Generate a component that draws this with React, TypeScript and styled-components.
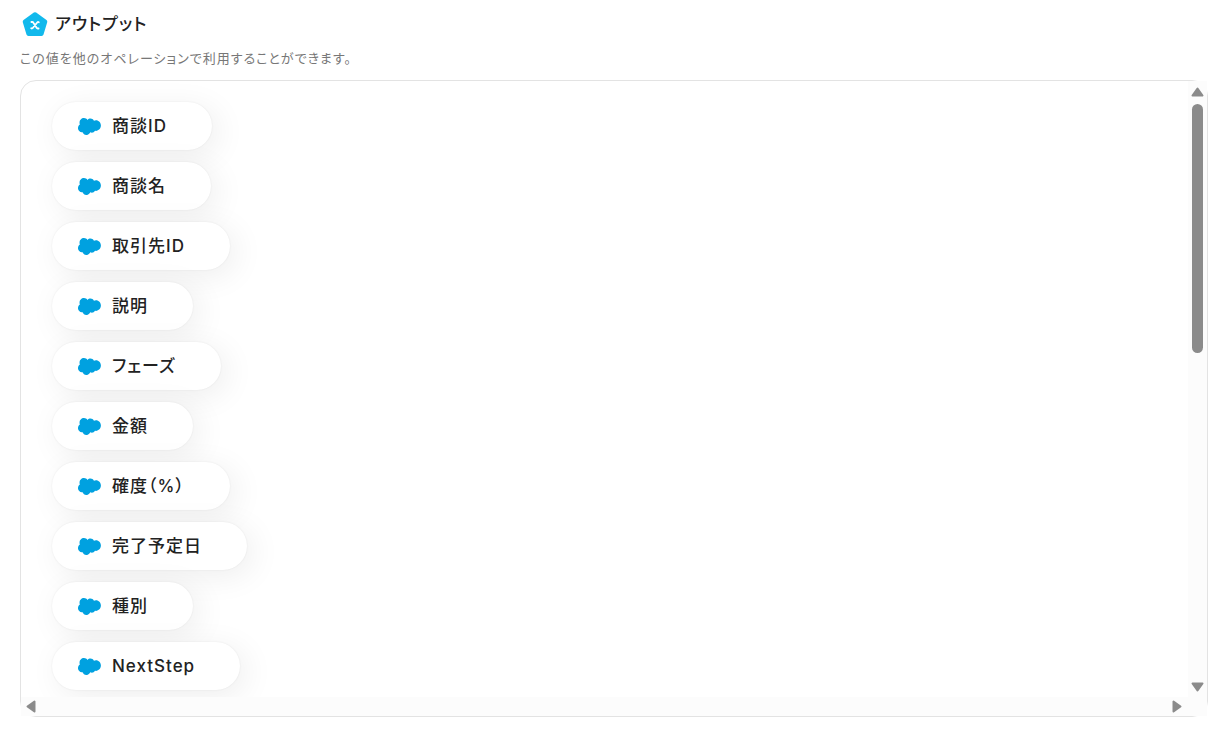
import React from "react";
import styled, { createGlobalStyle } from "styled-components";

const GlobalStyle = createGlobalStyle`
  *, *::before, *::after { box-sizing: border-box; }
  body {
    margin: 0;
    background: #fff;
    color: #222;
    font-family: Inter, "Noto Sans CJK JP", sans-serif;
    font-feature-settings: "palt";
    letter-spacing: 1px;
  }
`;

const Page = styled.main`
  display: flex;
  flex-direction: column;
  height: 100vh;
  padding: 8px 21px 35px 20px;
`;

const Header = styled.header`
  display: flex;
  align-items: center;
  gap: 6px;
  height: 32px;
  padding-left: 1px;
`;

const Title = styled.h2`
  margin: 0;
  font-size: 17px;
  line-height: 32px;
  font-weight: 500;
`;

const Description = styled.p`
  margin: 8px 0 12px;
  font-size: 13px;
  line-height: 20px;
  color: #777;
`;

const Panel = styled.section`
  flex: 1;
  min-height: 0;
  display: grid;
  grid-template-columns: minmax(0, 1fr) 19px;
  grid-template-rows: minmax(0, 1fr) 19px;
  border: 1px solid #e3e3e3;
  border-radius: 16px;
`;

const Viewport = styled.div`
  overflow: hidden;
  border-top-left-radius: 15px;
`;

const OutputList = styled.ul`
  display: flex;
  flex-direction: column;
  align-items: flex-start;
  gap: 12px;
  margin: 0;
  padding: 21px 31px;
  list-style: none;
`;

const OutputItem = styled.li`
  display: flex;
`;

const OutputButton = styled.button`
  display: flex;
  align-items: center;
  gap: 11px;
  height: 48px;
  padding: 0 45px 0 26px;
  border: 0;
  border-radius: 24px;
  background: #fff;
  box-shadow: 6px 6px 32px rgba(0, 0, 0, 0.07), 0 0 2px rgba(0, 0, 0, 0.08);
  color: inherit;
  font: inherit;
  font-feature-settings: inherit;
  letter-spacing: inherit;
  font-size: 17px;
  line-height: 24px;
  font-weight: 500;
  white-space: nowrap;
`;

const VerticalBar = styled.div`
  display: flex;
  flex-direction: column;
  align-items: center;
  justify-content: space-between;
  padding: 6px 0 5px;
  background: #fcfcfc;
`;

const VerticalTrack = styled.div`
  flex: 1;
  width: 11px;
  padding-top: 7px;
`;

const Thumb = styled.div`
  height: 43%;
  border-radius: 6px;
  background: #8b8b8b;
`;

const HorizontalBar = styled.div`
  grid-column: 1 / -1;
  display: flex;
  align-items: center;
  justify-content: space-between;
  padding: 0 25px 0 5px;
  background: #fcfcfc;
`;

const ScrollButton = styled.button`
  display: flex;
  padding: 0;
  border: 0;
  background: none;
`;

const outputs = [
  "商談ID",
  "商談名",
  "取引先ID",
  "説明",
  "フェーズ",
  "金額",
  "確度（%）",
  "完了予定日",
  "種別",
  "NextStep",
];

const OutputIcon = () => (
  <svg width="28" height="28" viewBox="0 0 28 28" aria-hidden="true">
    <path
      d="M14 4.200 24.300 11.600 20.600 24H7.400L3.700 11.600Z"
      fill="#12b9ec"
      stroke="#12b9ec"
      strokeWidth="4"
      strokeLinejoin="round"
    />
    <path
      d="M10.400 12H11.300Q12 12 12.400 12.700L15.600 17.800Q16 18.500 16.700 18.500H17.600M17.800 12.200Q16.900 11.700 16.200 12.500L11.800 18Q11.100 18.800 10.200 18.300"
      fill="none"
      stroke="#fff"
      strokeWidth="1.800"
      strokeLinecap="round"
      strokeLinejoin="round"
    />
  </svg>
);

const SalesforceCloud = () => (
  <svg width="23" height="17" viewBox="0 0 273 191" preserveAspectRatio="none" aria-hidden="true">
    <path
      fill="#00a1e0"
      d="M113 21.300c8.780-9.140 21-14.800 34.500-14.800 18 0 33.600 10 42 24.900a58 58 0 0 1 23.700-5.050c32.400 0 58.700 26.500 58.700 59.200s-26.300 59.200-58.700 59.200c-3.960 0-7.820-.398-11.600-1.150-7.350 13.100-21.400 22-37.400 22a42.700 42.700 0 0 1-18.800-4.320c-7.450 17.500-24.800 29.800-45 29.800-21.100 0-39-13.300-45.900-32a45.100 45.100 0 0 1-9.340.972c-25.100 0-45.400-20.600-45.400-45.900 0-17 9.140-31.800 22.700-39.800a52.600 52.600 0 0 1-4.350-21c0-29.200 23.700-52.800 52.900-52.800 17.100 0 32.400 8.150 42 20.800"
    />
  </svg>
);

const arrows = {
  up: { w: 13, h: 10, label: "上へスクロール", d: "M6.500 1.500 11.500 8.500H1.500Z" },
  down: { w: 13, h: 10, label: "下へスクロール", d: "M6.500 8.500 1.500 1.500H11.500Z" },
  left: { w: 10, h: 13, label: "左へスクロール", d: "M1.500 6.500 8.500 1.500V11.500Z" },
  right: { w: 10, h: 13, label: "右へスクロール", d: "M8.500 6.500 1.500 1.500V11.500Z" },
};

const Arrow = ({ direction }: { direction: keyof typeof arrows }) => {
  const { w, h, label, d } = arrows[direction];
  return (
    <ScrollButton type="button" aria-label={label}>
      <svg width={w} height={h} viewBox={`0 0 ${w} ${h}`} aria-hidden="true">
        <path d={d} fill="#8b8b8b" stroke="#8b8b8b" strokeWidth="2" strokeLinejoin="round" />
      </svg>
    </ScrollButton>
  );
};

export default function App() {
  return (
    <>
      <GlobalStyle />
      <Page lang="ja">
        <Header>
          <OutputIcon />
          <Title>アウトプット</Title>
        </Header>
        <Description>この値を他のオペレーションで利用することができます。</Description>
        <Panel>
          <Viewport>
            <OutputList>
              {outputs.map((name) => (
                <OutputItem key={name}>
                  <OutputButton type="button">
                    <SalesforceCloud />
                    {name}
                  </OutputButton>
                </OutputItem>
              ))}
            </OutputList>
          </Viewport>
          <VerticalBar>
            <Arrow direction="up" />
            <VerticalTrack>
              <Thumb />
            </VerticalTrack>
            <Arrow direction="down" />
          </VerticalBar>
          <HorizontalBar>
            <Arrow direction="left" />
            <Arrow direction="right" />
          </HorizontalBar>
        </Panel>
      </Page>
    </>
  );
}
